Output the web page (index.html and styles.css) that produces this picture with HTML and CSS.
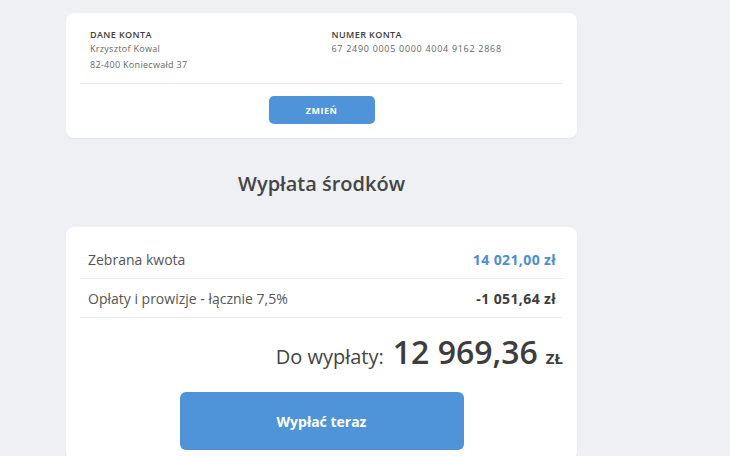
FILE: index.html
```html
<!DOCTYPE html>
<html lang="pl">
<head>
<meta charset="utf-8">
<link rel="stylesheet" href="styles.css">
</head>
<body>
<main class="page">
  <section class="card account">
    <div class="account-grid">
      <div class="col">
        <div class="label">DANE KONTA</div>
        <div class="value">Krzysztof Kowal</div>
        <div class="value">82-400 Koniecwałd 37</div>
      </div>
      <div class="col">
        <div class="label">NUMER KONTA</div>
        <div class="value number">67 2490 0005 0000 4004 9162 2868</div>
      </div>
    </div>
    <div class="account-actions">
      <button class="btn btn-small">ZMIEŃ</button>
    </div>
  </section>

  <h1 class="title">Wypłata środków</h1>

  <section class="card payout">
    <div class="row">
      <span class="row-label">Zebrana kwota</span>
      <span class="row-amount blue">14 021,00 zł</span>
    </div>
    <div class="row">
      <span class="row-label">Opłaty i prowizje - łącznie 7,5%</span>
      <span class="row-amount">-1 051,64 zł</span>
    </div>
    <div class="total">
      <span class="total-label">Do wypłaty:</span>
      <span class="total-amount">12 969,36</span>
      <span class="total-cur">ZŁ</span>
    </div>
    <div class="payout-actions">
      <button class="btn btn-big">Wypłać teraz</button>
    </div>
  </section>
</main>
</body>
</html>
```

FILE: styles.css
```css
* { box-sizing: border-box; }
html, body { margin: 0; padding: 0; }
body {
  background: #eef0f4;
  font-family: "Open Sans", Lato, sans-serif;
  color: #444;
  width: 730px;
  height: 456px;
  overflow: hidden;
}
.page {
  width: 511px;
  margin-left: 66px;
  padding-top: 13px;
}
.card {
  background: #fff;
  border-radius: 8px;
  box-shadow: 0 1px 2px rgba(0,0,0,0.05);
  padding: 0 14px;
}
.account {
  padding-top: 16px;
  padding-bottom: 14px;
}
.account-grid {
  display: grid;
  grid-template-columns: 1fr 1fr;
  padding-bottom: 10px;
  border-bottom: 1px solid #e9ebee;
}
.col { padding-left: 10px; }
.label {
  font-size: 9px;
  font-weight: 600;
  line-height: 12px;
  color: #3d3d3d;
  letter-spacing: 0.4px;
}
.value {
  font-size: 9px;
  line-height: 16px;
  color: #666;
  letter-spacing: 0.3px;
}
.value.number { letter-spacing: 0.7px; }
.account-actions {
  display: flex;
  justify-content: center;
  padding-top: 12px;
}
.btn {
  background: #4f93d8;
  color: #fff;
  border: none;
  font-family: "Open Sans", Lato, sans-serif;
  font-weight: 700;
  padding: 0;
}
.btn-small {
  width: 106px;
  height: 28px;
  border-radius: 5px;
  font-size: 9px;
  letter-spacing: 0.5px;
}
.title {
  margin: 34px 0 31px;
  text-align: center;
  font-size: 20px;
  line-height: 24px;
  font-weight: 600;
  color: #454545;
}
.payout { padding-top: 13px; padding-bottom: 10px; }
.row {
  display: flex;
  justify-content: space-between;
  align-items: center;
  height: 39px;
  padding: 0 7px 0 8px;
  border-bottom: 1px solid #e9ebee;
}
.row-label {
  font-size: 14px;
  color: #555;
}
.row-amount {
  font-size: 14px;
  font-weight: 700;
  color: #3d3d3d;
  letter-spacing: 0.4px;
}
.row-amount.blue { color: #4a8fd3; }
.total {
  display: flex;
  justify-content: flex-end;
  align-items: baseline;
  margin-top: 14px;
  height: 40px;
  line-height: 40px;
}
.total-label {
  font-size: 20px;
  color: #444;
  margin-right: 9px;
}
.total-amount {
  font-size: 32px;
  font-weight: 600;
  color: #3d3d3d;
  margin-right: 8px;
}
.total-cur {
  font-size: 15px;
  font-weight: 700;
  color: #3d3d3d;
}
.payout-actions {
  display: flex;
  justify-content: center;
  margin-top: 20px;
}
.btn-big {
  width: 284px;
  height: 58px;
  border-radius: 6px;
  font-size: 14px;
}
```
